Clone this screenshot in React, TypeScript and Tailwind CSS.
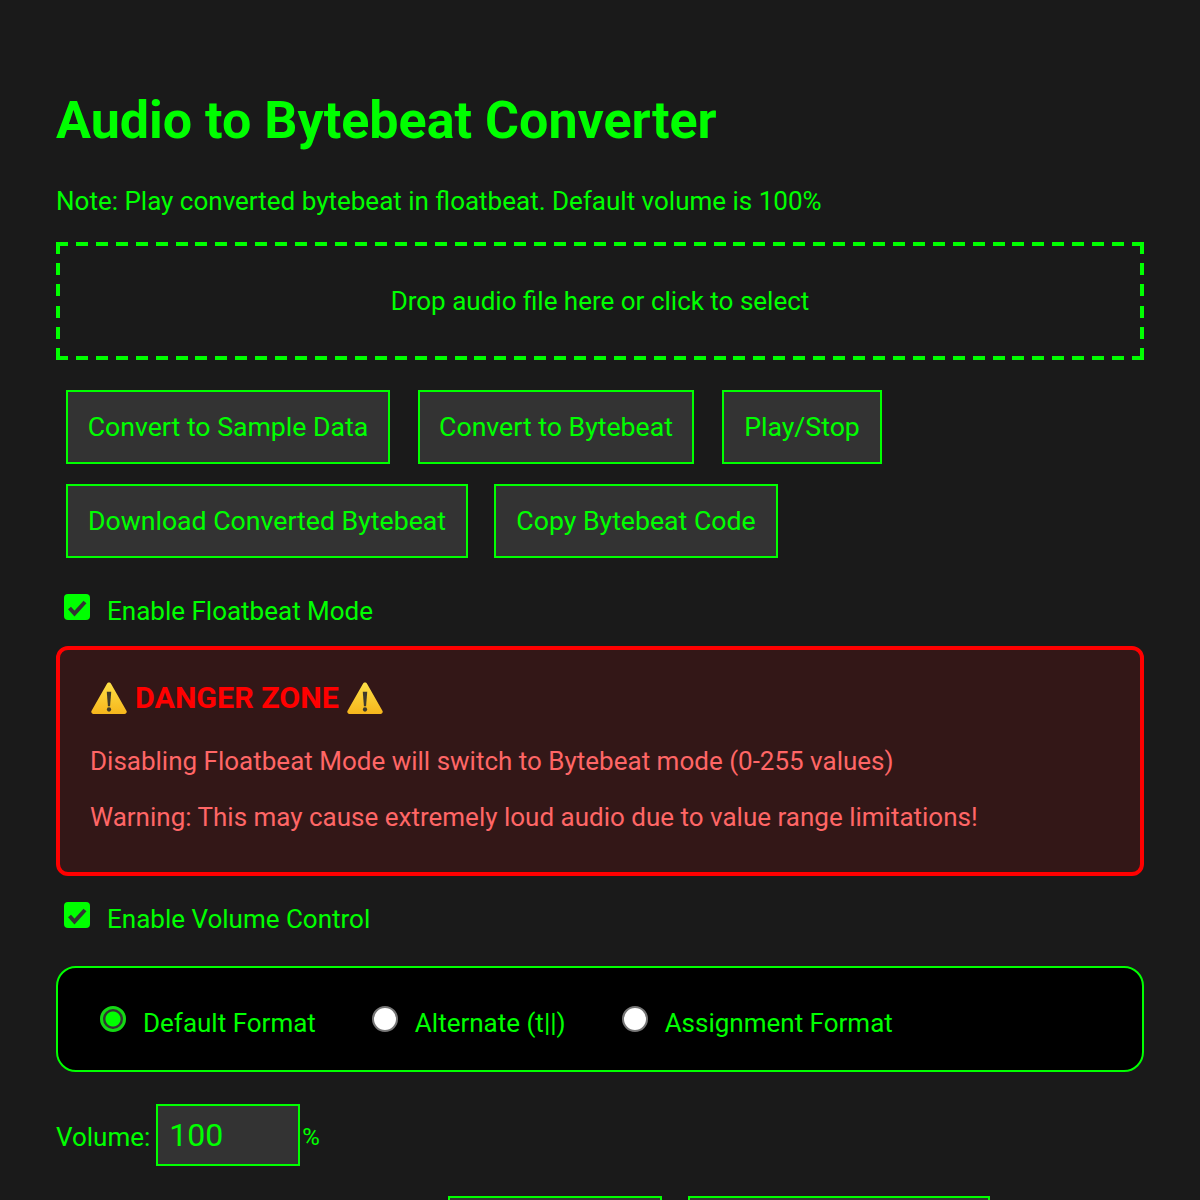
const btn =
  "h-[74px] border-2 border-[#00ff00] bg-[#333333] text-[26.67px] text-[#00ff00] whitespace-nowrap";

function Warn() {
  return (
    <svg viewBox="0 0 37 33" className="inline-block h-[33px] w-[36px]">
      <defs>
        <linearGradient id="warn" x1="0" y1="0" x2="0" y2="1">
          <stop offset="0" stopColor="#fde047" />
          <stop offset="1" stopColor="#f6b61c" />
        </linearGradient>
      </defs>
      <path
        d="M18.500 0c-.9 0-1.700.5-2.100 1.300L.6 29c-.9 1.500.2 3.400 2 3.400h31.800c1.800 0 2.900-1.900 2-3.400L20.600 1.300C20.200.5 19.400 0 18.500 0z"
        fill="url(#warn)"
      />
      <path d="M16.200 9.500h4.600l-1.200 15h-2.200z" fill="#3f3b2c" />
      <circle cx="18.500" cy="27.800" r="2.200" fill="#3f3b2c" />
    </svg>
  );
}

function Check({ label }: { label: string }) {
  return (
    <label className="ml-2 flex h-[26px] items-center">
      <span className="relative h-[26px] w-[26px]">
        <input
          type="checkbox"
          defaultChecked
          className="m-0 block h-[26px] w-[26px] appearance-none rounded-[4px] bg-[#00ff00]"
        />
        <svg viewBox="0 0 26 26" className="pointer-events-none absolute inset-0 h-[26px] w-[26px]">
          <path d="M5.500 14l5 5.500L21 8" fill="none" stroke="#333333" strokeWidth="4" />
        </svg>
      </span>
      <span className="ml-[17px] mt-[8px] text-[26px] text-[#00ff00]">{label}</span>
    </label>
  );
}

function Radio({ label, checked }: { label: string; checked?: boolean }) {
  return (
    <label className="flex h-[26px] items-center">
      <input
        type="radio"
        name="format"
        defaultChecked={checked}
        className="m-0 h-[26px] w-[26px] appearance-none rounded-full border-2 border-[#767676] bg-white checked:border-[3px] checked:border-[#14d814] checked:bg-[radial-gradient(circle,#00ff00_7px,#333333_8px)]"
      />
      <span className="ml-[17px] mt-[8px] text-[26px] text-[#00ff00]">{label}</span>
    </label>
  );
}

export default function App() {
  return (
    <div className="h-[1200px] overflow-hidden bg-[#1a1a1a] px-14 pt-[91px] font-['Roboto',sans-serif] text-[#00ff00]">
      <h1 className="text-[52px] leading-[60px] font-bold">Audio to Bytebeat Converter</h1>
      <p className="mt-[35px] text-[26px] leading-[30px]">
        Note: Play converted bytebeat in floatbeat. Default volume is 100%
      </p>

      <div className="mt-[26px] flex h-[118px] items-center justify-center bg-[repeating-linear-gradient(90deg,#00ff00_0_12px,transparent_12px_19.926px),repeating-linear-gradient(90deg,#00ff00_0_12px,transparent_12px_19.926px),repeating-linear-gradient(180deg,#00ff00_0_12px,transparent_12px_21.2px),repeating-linear-gradient(180deg,#00ff00_0_12px,transparent_12px_21.2px)] bg-[length:100%_4px,100%_4px,4px_100%,4px_100%] bg-[position:top,bottom,left,right] bg-no-repeat text-[26px]">
        Drop audio file here or click to select
      </div>

      <div className="mt-[30px] ml-[10px] flex flex-col gap-5">
        <div className="flex gap-7">
          <button className={`${btn} w-[324px]`}>Convert to Sample Data</button>
          <button className={`${btn} w-[276px]`}>Convert to Bytebeat</button>
          <button className={`${btn} w-[160px]`}>Play/Stop</button>
        </div>
        <div className="flex gap-[26px]">
          <button className={`${btn} w-[402px]`}>Download Converted Bytebeat</button>
          <button className={`${btn} w-[284px]`}>Copy Bytebeat Code</button>
        </div>
      </div>

      <div className="mt-[36px]">
        <Check label="Enable Floatbeat Mode" />
      </div>

      <div className="mt-[26px] h-[230px] rounded-xl border-4 border-[#ff0000] bg-[#331717] px-[30px] pt-[30px]">
        <div className="flex items-center gap-2 text-[30.42px] leading-[36px] font-bold text-[#ff0000]">
          <span className="ml-px flex">
            <Warn />
          </span>
          DANGER ZONE
          <Warn />
        </div>
        <p className="mt-[30px] text-[26px] leading-[30px] text-[#ff6666]">
          Disabling Floatbeat Mode will switch to Bytebeat mode (0-255 values)
        </p>
        <p className="mt-[26px] text-[26px] leading-[30px] text-[#ff6666]">
          Warning: This may cause extremely loud audio due to value range limitations!
        </p>
      </div>

      <div className="mt-[26px]">
        <Check label="Enable Volume Control" />
      </div>

      <div className="mt-[38px] flex h-[106px] items-center gap-[56px] rounded-[20px] border-2 border-[#00ff00] bg-black pl-[42px]">
        <Radio label="Default Format" checked />
        <Radio label="Alternate (t||)" />
        <Radio label="Assignment Format" />
      </div>

      <div className="mt-[32px] flex items-center text-[26px]">
        <span className="mt-[4px]">Volume:</span>
        <input
          defaultValue="100"
          className="ml-[6px] h-[62px] w-[144px] border-2 border-[#00ff00] bg-[#333333] px-[11px] text-[32px] text-[#00ff00] outline-none"
        />
        <span className="mt-[4px] ml-[2px] text-[24px]">%</span>
      </div>

      <div className="mt-[30px] ml-[392px] flex gap-[26px]">
        <button className={`${btn} w-[214px]`} />
        <button className={`${btn} w-[302px]`} />
      </div>
    </div>
  );
}
